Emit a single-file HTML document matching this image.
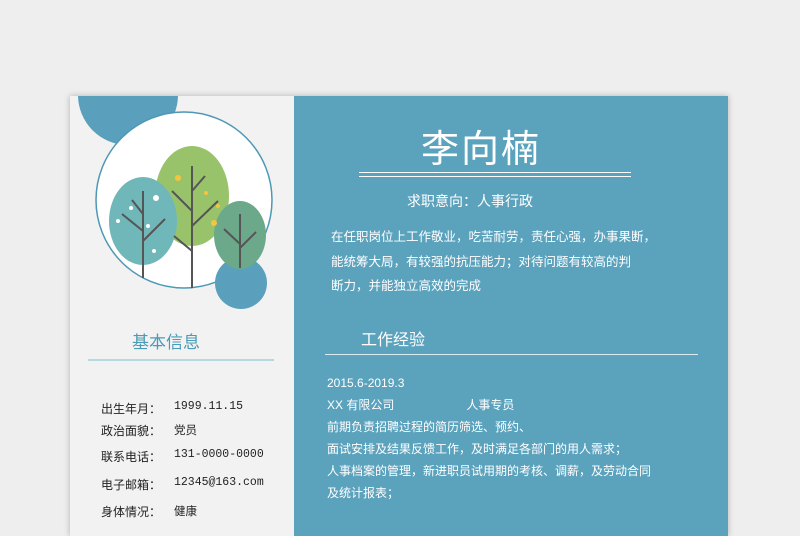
<!DOCTYPE html><html><head><meta charset="utf-8"><style>
body{margin:0;width:800px;height:526px;background:#eeeeee;overflow:hidden;font-family:"Liberation Sans","Noto Sans CJK SC",sans-serif;position:relative}
.card{position:absolute;left:70px;top:96px;width:658px;height:440px;box-shadow:0 0 6px rgba(0,0,0,.25);background:#f2f2f2;overflow:hidden}
.right{position:absolute;left:224px;top:0;width:434px;height:440px;background:#5ba2bd;color:#fff}
.t{position:absolute;white-space:nowrap}
.info{position:absolute;left:31px;font-size:12px;color:#222;white-space:nowrap;width:190px}
.info span{position:absolute;left:73px;top:0;font-family:"Liberation Mono","Noto Sans CJK SC",monospace;font-size:11.5px;white-space:nowrap}
</style></head><body>
<div class="card">
<svg style="position:absolute;left:0;top:0" width="224" height="440">
<circle cx="58" cy="-1" r="50" fill="#5aa0bc"/>
<circle cx="114" cy="104" r="88" fill="#fff" stroke="#4e98b6" stroke-width="1.5"/>
<circle cx="171" cy="187" r="26" fill="#5aa0bc"/>
<ellipse cx="122" cy="100" rx="37" ry="50" fill="#98c36a"/>
<ellipse cx="73" cy="125" rx="34" ry="44" fill="#6fb7b9"/>
<ellipse cx="170" cy="139" rx="26" ry="34" fill="#6ba98a"/>
<g stroke="#555" stroke-width="2" fill="none">
<path d="M73 182V95M73 135L52 118M73 145L95 123M73 118L62 104"/>
<path d="M122 192V70M122 115L102 95M122 130L148 105M122 155L104 140M122 95L135 80"/>
<path d="M170 172V118M170 148L154 133M170 152L186 136"/>
</g>
<g fill="#f7c340"><circle cx="108" cy="82" r="3"/><circle cx="144" cy="127" r="3"/><circle cx="136" cy="97" r="2"/><circle cx="148" cy="110" r="2"/></g>
<g fill="#fff"><circle cx="86" cy="102" r="3"/><circle cx="61" cy="112" r="2"/><circle cx="48" cy="125" r="2"/><circle cx="78" cy="130" r="2"/><circle cx="84" cy="155" r="2"/></g>
<line x1="18" y1="264" x2="204" y2="264" stroke="#7bbdd0" stroke-width="1"/>
</svg>
<div class="t" style="left:62px;top:232px;font-size:17px;color:#4a9bb6">基本信息</div>
<div class="info" style="top:304px">出生年月：<span>1999.11.15</span></div>
<div class="info" style="top:326px">政治面貌：<span>党员</span></div>
<div class="info" style="top:352px">联系电话：<span>131-0000-0000</span></div>
<div class="info" style="top:380px">电子邮箱：<span>12345@163.com</span></div>
<div class="info" style="top:407px">身体情况：<span>健康</span></div>
<div class="right">
<div class="t" style="left:127px;top:22px;font-size:38px;letter-spacing:2px">李向楠</div>
<div style="position:absolute;left:65px;top:76px;width:272px;height:1px;background:#fff"></div>
<div style="position:absolute;left:65px;top:80px;width:272px;height:1px;background:#fff"></div>
<div class="t" style="left:113px;top:95px;font-size:14px">求职意向：人事行政</div>
<div class="t" style="left:37px;top:129px;font-size:12.5px;line-height:24.5px">在任职岗位上工作敬业，吃苦耐劳，责任心强，办事果断，<br>能统筹大局，有较强的抗压能力；对待问题有较高的判<br>断力，并能独立高效的完成</div>
<div class="t" style="left:67px;top:230px;font-size:16px">工作经验</div>
<div style="position:absolute;left:31px;top:258px;width:373px;height:1px;background:#dbeaf0"></div>
<div class="t" style="left:33px;top:276px;font-size:12px;line-height:22px">2015.6-2019.3<br>XX 有限公司　　　　　　人事专员<br>前期负责招聘过程的简历筛选、预约、<br>面试安排及结果反馈工作，及时满足各部门的用人需求；<br>人事档案的管理，新进职员试用期的考核、调薪，及劳动合同<br>及统计报表；</div>
</div>
</div>
</body></html>
